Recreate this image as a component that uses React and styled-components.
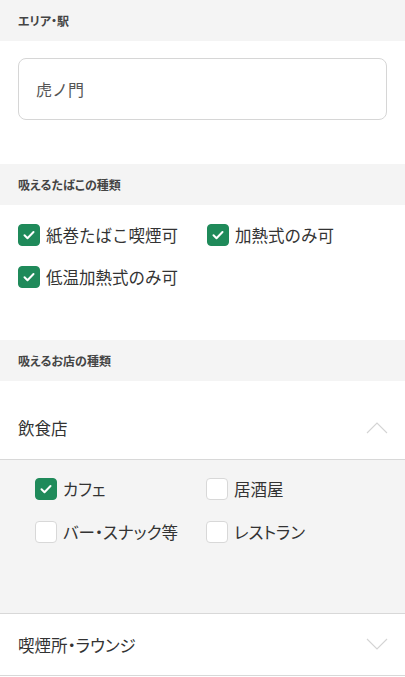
import React from "react";
import styled, { createGlobalStyle } from "styled-components";

const GlobalStyle = createGlobalStyle`
  * { box-sizing: border-box; }
  body {
    margin: 0;
    background: #fff;
    font-family: "Noto Sans CJK JP", "Noto Sans", sans-serif;
    color: #333;
  }
`;

const tobacco = [
  { label: "紙巻たばこ喫煙可", checked: true },
  { label: "加熱式のみ可", checked: true },
  { label: "低温加熱式のみ可", checked: true },
];

const shops = [
  { label: "カフェ", checked: true, tight: true },
  { label: "居酒屋", checked: false },
  { label: "バー・スナック等", checked: false, tight: true },
  { label: "レストラン", checked: false, tight: true },
];

const Check = ({ checked, label, tight }) => (
  <CheckItem>
    <Box $checked={checked}>
      {checked && (
        <svg width="14" height="14" viewBox="0 0 14 14">
          <path d="M2.5 7.2l3 3 6-6.2" fill="none" stroke="#fff" strokeWidth="2" strokeLinecap="round" strokeLinejoin="round" />
        </svg>
      )}
    </Box>
    <CheckLabel $tight={tight}>{label}</CheckLabel>
  </CheckItem>
);

const Chevron = ({ up }) => (
  <ChevronIcon width="22" height="13" viewBox="0 0 22 13">
    <path d={up ? "M1 12L11 2l10 10" : "M1 1l10 10L21 1"} fill="none" stroke="#d4d4d4" strokeWidth="1.1" />
  </ChevronIcon>
);

const App = () => {
  return (
    <Page>
      <GlobalStyle />
      <SectionHeader>エリア・駅</SectionHeader>
      <InputArea>
        <TextInput>虎ノ門</TextInput>
      </InputArea>

      <SectionHeader>吸えるたばこの種類</SectionHeader>
      <CheckGrid>
        {tobacco.map((t) => (
          <Check key={t.label} {...t} />
        ))}
      </CheckGrid>

      <SectionHeader>吸えるお店の種類</SectionHeader>
      <AccordionRow $height="79px" $offset="15px">
        <RowTitle>飲食店</RowTitle>
        <Chevron up />
      </AccordionRow>
      <Panel>
        <PanelGrid>
          {shops.map((s) => (
            <Check key={s.label} {...s} />
          ))}
        </PanelGrid>
      </Panel>
      <AccordionRow $height="62px" $offset="0px">
        <RowTitle $tight>喫煙所・ラウンジ</RowTitle>
        <Chevron />
      </AccordionRow>
    </Page>
  );
};

export default App;

const Page = styled.div`
  width: 405px;
  min-height: 677px;
  background: #fff;
`;

const SectionHeader = styled.div`
  height: 41px;
  display: flex;
  align-items: center;
  padding: 0 18px;
  background: #f4f4f4;
  font-size: 12px;
  font-weight: 700;
  color: #444;
  font-feature-settings: "palt";
`;

const InputArea = styled.div`
  padding: 17px 18px 44px;
`;

const TextInput = styled.div`
  height: 62px;
  border: 1px solid #d6d6d6;
  border-radius: 8px;
  display: flex;
  align-items: center;
  padding: 0 17px;
  font-size: 16px;
  color: #555;
`;

const CheckGrid = styled.div`
  display: grid;
  grid-template-columns: 189px auto;
  row-gap: 19px;
  padding: 18px 18px 52px;
`;

const CheckItem = styled.div`
  display: flex;
  align-items: center;
  gap: 6px;
  height: 23px;
`;

const Box = styled.span`
  width: 22px;
  height: 22px;
  border-radius: 4px;
  flex: none;
  display: flex;
  align-items: center;
  justify-content: center;
  background: ${(p) => (p.$checked ? "#1f8a5a" : "#fff")};
  border: 1px solid ${(p) => (p.$checked ? "#1f8a5a" : "#d8d8d8")};
`;

const CheckLabel = styled.span`
  font-size: 16.5px;
  color: #333;
  white-space: nowrap;
  font-feature-settings: ${(p) => (p.$tight ? '"palt"' : "normal")};
`;

const AccordionRow = styled.div`
  height: ${(p) => p.$height};
  display: flex;
  align-items: center;
  justify-content: space-between;
  padding: ${(p) => p.$offset} 17px 0 18px;
  border-bottom: 1px solid #d8d8d8;
  background: #fff;
`;

const RowTitle = styled.span`
  font-size: 16.5px;
  color: #333;
  font-feature-settings: ${(p) => (p.$tight ? '"palt"' : "normal")};
`;

const ChevronIcon = styled.svg`
  flex: none;
`;

const Panel = styled.div`
  height: 154px;
  background: #f4f4f4;
  border-bottom: 1px solid #d8d8d8;
  padding: 17px 18px 0 35px;
`;

const PanelGrid = styled.div`
  display: grid;
  grid-template-columns: 171px auto;
  row-gap: 20px;
`;
